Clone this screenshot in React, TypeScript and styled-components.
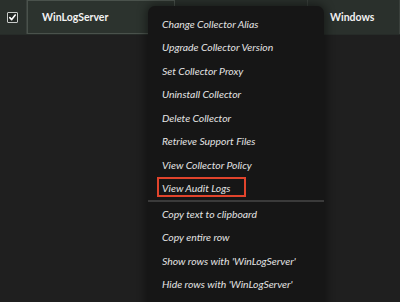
import React from "react";
import styled, { createGlobalStyle } from "styled-components";

const Global = createGlobalStyle`
  html, body { margin: 0; padding: 0; background: #1f1f1f; }
  body { width: 400px; height: 302px; overflow: hidden; font-family: Lato, "Open Sans", sans-serif; }
  #root { width: 400px; height: 302px; }
`;

const Page = styled.div`
  position: relative;
  width: 400px;
  height: 302px;
  background: #1f1f1f;
  overflow: hidden;
`;

const Row = styled.div`
  display: flex;
  height: 35px;
  background: #2a302c;
  border-bottom: 1px solid #262b28;
  box-sizing: border-box;
`;

const Cell = styled.div<{ $w?: number; $selected?: boolean; $pad?: number }>`
  box-sizing: border-box;
  display: flex;
  align-items: center;
  ${(p) => (p.$w ? `width: ${p.$w}px; flex: none;` : "flex: 1;")}
  padding-left: ${(p) => p.$pad ?? 0}px;
  border-right: 1px solid #3a403c;
  ${(p) =>
    p.$selected
      ? "border: 1px solid #4a524c; background: #2c332e;"
      : ""}
  color: #f2f2f2;
  font-weight: 700;
  font-size: 10.5px;
`;

const Check = styled.span`
  box-sizing: border-box;
  width: 11px;
  height: 11px;
  margin-left: 7px;
  border: 1px solid #c8cbc9;
  border-radius: 1px;
  display: flex;
  align-items: center;
  justify-content: center;
  background: #232825;
`;

const Menu = styled.div`
  position: absolute;
  left: 148px;
  top: 6px;
  width: 176px;
  height: 310px;
  background: #161616;
  border-radius: 7px;
  box-shadow: 0 0 10px 2px rgba(0, 0, 0, 0.45);
  padding-top: 6px;
  box-sizing: border-box;
  display: flex;
  flex-direction: column;
`;

const Item = styled.div<{ $marked?: boolean }>`
  position: relative;
  height: 23.5px;
  flex: none;
  display: flex;
  align-items: center;
  padding-left: 14px;
  font-style: italic;
  font-size: 10.4px;
  color: #e4e4e4;
  white-space: nowrap;
  ${(p) =>
    p.$marked
      ? `&::after {
          content: "";
          position: absolute;
          left: 9px;
          top: 0.5px;
          width: 89px;
          height: 20px;
          box-sizing: border-box;
          border: 2px solid #e1442c;
        }`
      : ""}
`;

const Separator = styled.div`
  height: 2px;
  flex: none;
  background: #3a3a3a;
`;

const top = [
  "Change Collector Alias",
  "Upgrade Collector Version",
  "Set Collector Proxy",
  "Uninstall Collector",
  "Delete Collector",
  "Retrieve Support Files",
  "View Collector Policy",
];

const bottom = [
  "Copy text to clipboard",
  "Copy entire row",
  "Show rows with 'WinLogServer'",
  "Hide rows with 'WinLogServer'",
];

export default function App() {
  return (
    <Page>
      <Global />
      <Row>
        <Cell $w={27}>
          <Check>
            <svg width="9" height="9" viewBox="0 0 9 9">
              <path d="M1.8 4.6 L3.7 6.6 L7.2 2" stroke="#ffffff" strokeWidth="1.6" fill="none" strokeLinecap="round" strokeLinejoin="round" />
            </svg>
          </Check>
        </Cell>
        <Cell $w={148} $selected $pad={14}>WinLogServer</Cell>
        <Cell $w={133} />
        <Cell $pad={22}>Windows</Cell>
      </Row>
      <Menu>
        {top.map((t) => (
          <Item key={t}>{t}</Item>
        ))}
        <Item $marked>View Audit Logs</Item>
        <Separator />
        {bottom.map((t) => (
          <Item key={t}>{t}</Item>
        ))}
      </Menu>
    </Page>
  );
}
